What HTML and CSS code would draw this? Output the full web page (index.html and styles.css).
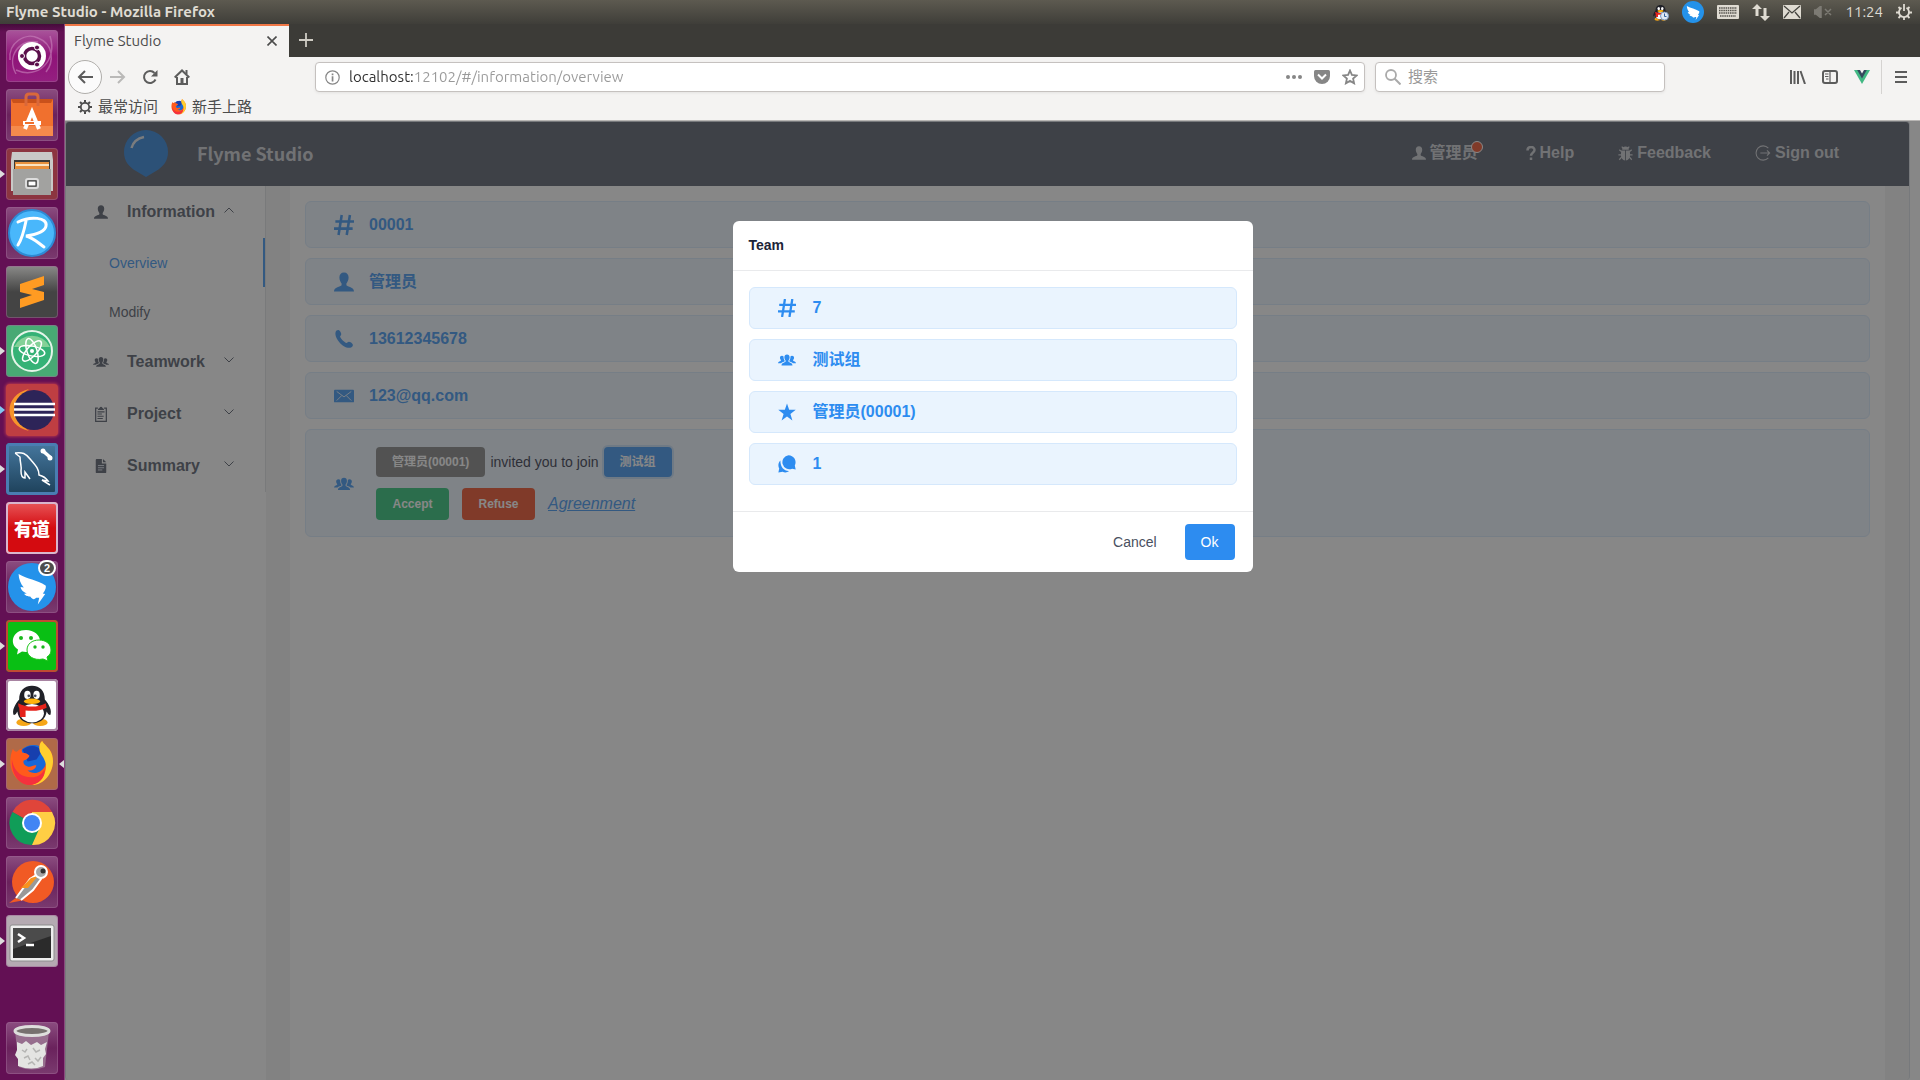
FILE: index.html
```html
<!DOCTYPE html>
<html lang="zh-CN">
<head>
<meta charset="utf-8">
<title>Flyme Studio</title>
<link rel="stylesheet" href="styles.css">
</head>
<body>
<svg class="defs" aria-hidden="true">
  <symbol id="person" viewBox="0 0 20 20"><path d="M10 0.5c3 0 4.6 2 4.6 5 0 3-1.4 4.6-2.2 6v1.8c1 1.7 7.6 1.700 7.600 6.200H0c0-4.500 6.600-4.500 7.600-6.200v-1.800C6.800 10.100 5.400 8.500 5.400 5.500c0-3 1.600-5 4.600-5z"/></symbol>
  <symbol id="people" viewBox="0 0 24 24"><path d="M12 4.500c2.300 0 3.500 1.500 3.500 3.800 0 2.200-1 3.400-1.600 4.400v1.400c1 1.700 5.400 1.500 5.400 5.100H4.700c0-3.600 4.400-3.400 5.400-5.100v-1.400c-.6-1-1.600-2.200-1.600-4.400 0-2.300 1.200-3.800 3.500-3.800z"/><path d="M5.300 6.200c1 0 1.700.4 2.100 1 0 2.500.3 4 1.500 5.800v.8c-.8.9-3.600 1-4.700 2.500H0c0-2.300 2.900-2.300 3.800-3.300v-1c-.5-.8-1.200-1.600-1.200-3.100 0-1.600 1-2.700 2.700-2.700zM18.700 6.200c-1 0-1.700.4-2.100 1 0 2.500-.3 4-1.500 5.800v.8c.8.9 3.600 1 4.700 2.500H24c0-2.300-2.900-2.300-3.800-3.300v-1c.5-.8 1.200-1.600 1.200-3.100 0-1.600-1-2.700-2.700-2.700z"/></symbol>
  <symbol id="pound" viewBox="0 0 22 22"><path d="M8.500 0 5 22M17.500 0 14 22M1.500 7.200H22M0 15H20.500" fill="none" stroke="currentColor" stroke-width="2.800"/></symbol>
  <symbol id="phone" viewBox="0 0 20 20"><path d="M1.500 3.500C2 1.500 3.500.8 5 1.200c1.300.9 2.400 2.900 2.200 4.200-.2 1-1.200 1.400-1.100 2.300.6 2 4.500 5.800 6.300 6.200 1 .1 1.400-1 2.500-1.100 1.300 0 3.300 1.400 3.900 2.600.4 1.400-.7 2.700-2.500 3.300C9.500 20 .3 9.500 1.500 3.500z"/></symbol>
  <symbol id="mail" viewBox="0 0 22 14"><path d="M1 0h20q1 0 1 1v12q0 1-1 1H1q-1 0-1-1V1q0-1 1-1z"/><path d="m3 2 8 6 8-6M3 12l5.500-5.500M19 12l-5.500-5.500" class="cut"/></symbol>
  <symbol id="clipboard" viewBox="0 0 14 18"><path d="M3.500 2.500H1v14.800h12V2.500h-2.500" fill="none" stroke="currentColor" stroke-width="1.400"/><path d="M3.500 4.500c0-2 2-1.500 2.300-3C6 .5 8 .5 8.200 1.500c.3 1.500 2.300 1 2.300 3zM3 6h8v1.200H3zM3 8.500h5v1.200H3zM3 11h7v1.200H3zM3 13.500h6v1.200H3z"/></symbol>
  <symbol id="doc" viewBox="0 0 12 16"><path d="M1 0h6v5h5v10q0 1-1 1H1q-1 0-1-1V1q0-1 1-1z"/><path d="M8.200 0 12 3.800H8.200z"/><path d="M2.500 7.500h7M2.500 10h7M2.500 12.500h5" class="cut"/></symbol>
  <symbol id="chev" viewBox="0 0 10 6"><path d="m.5.500 4.500 4.500L9.500.5" fill="none" stroke="currentColor"/></symbol>
  <symbol id="starfill" viewBox="0 0 20 20"><path d="m10 .5 2.400 7.100h7.300l-5.900 4.500 2.200 7.400-6-4.500-6 4.500 2.200-7.400L.3 7.600h7.300z"/></symbol>
  <symbol id="chat" viewBox="0 0 18 18"><path d="M10.500.3a7 7 0 0 1 6.300 10.200l.9 4-3.600-.8A7 7 0 1 1 10.500.3z"/><path d="M2.400 5.500C.2 7.700-.2 11 1.200 13.500L.4 17.600l4.200-.8c2.300 1.100 4.800.7 6.500-.8C6 16.300 2.200 11.500 2.400 5.500z"/></symbol>
  <symbol id="bug" viewBox="0 0 18 18"><path d="M5 4.500a4 4 0 0 1 8 0zM3.800 5.500h4.700v11.800c-3-.5-5-3-5-6zM9.500 5.500h4.700l.3 5.800c0 3-2 5.500-5 6z"/><path d="M6.500 3 4.500.8M11.500 3l2-2.200M4.500 7 1.500 4.500M13.500 7l3-2.500M4 10.500H.5M14 10.500h3.500M4.500 13l-3 3.500M13.500 13l3 3.500" fill="none" stroke="currentColor" stroke-width="1.500"/></symbol>
  <symbol id="signout" viewBox="0 0 18 18"><path d="M15 3.500a8 8 0 1 0 0 11M6 9h10.500M13.500 6l3 3-3 3" fill="none" stroke="currentColor" stroke-width="1.200"/></symbol>
  <symbol id="gear" viewBox="0 0 16 16"><circle cx="8" cy="8" r="4.200" fill="none" stroke="currentColor" stroke-width="1.800"/><path d="M8 1v2.500M8 12.500V15M1 8h2.500M12.500 8H15M3 3l1.800 1.800M11.200 11.200 13 13M3 13l1.800-1.800M11.200 4.800 13 3" stroke="currentColor" stroke-width="2"/></symbol>
  <symbol id="firefox" viewBox="0 0 48 48"><circle cx="25" cy="22" r="17" fill="#1768d8"/><path d="M14 10c5-5 14-6 20 1l-6 9-9 2z" fill="#173fae"/><path d="M4 9c1 2 2 3 4 3 2-2 4-3 5-3 0 2 0 3 1 4 3 0 5 1 7 3-1 3-4 4-6 5-1 3 1 5 4 6 4 1 6-2 9-1-1 4-5 6-9 5 3 3 9 4 13 1 6-4 7-10 5-15-2-5-5-5-6-9 0-3 1-6 3-7 1 3 8 7 10 14 4 13-5 31-21 31C7 46-4 28 4 9z" fill="#ff5a1c"/><path d="M31 8c0-3 1-6 3-7 1 3 8 7 10 14 4 13-5 31-21 31 12-3 18-17 13-26-2-5-5-6-5-12z" fill="#ffcf2f"/><path d="M3 20c2 13 11 19 22 18 6-1 9-4 11-8 2 7-5 16-15 16C10 46 2 34 3 20z" fill="#f5313d"/></symbol>
  <symbol id="wing" viewBox="0 0 24 24"><circle cx="12" cy="12" r="12" fill="#2492ea"/><path d="M5.300 5.500c4.500 2.500 9 3 13.500 5.700.5 1-.5 3-1.400 4.100l1.200.2-3.700 5.300.7-3.400h-1.500c-1 1-1.700 1-3-.6 0 0-2.200.1-3-1.400l1.300-.2C7.300 14.500 6.400 13 6.300 12l1.600.3C6.200 10.200 5.400 8 5.300 5.500z" fill="#fff"/></symbol>
  <symbol id="penguin" viewBox="0 0 48 48"><ellipse cx="15" cy="43" rx="8" ry="4" fill="#f6a617"/><ellipse cx="33" cy="43" rx="8" ry="4" fill="#f6a617"/><path d="M24 3c9 0 14 6 14 15 5 6 8 12 6 17-2 0-3-2-4-4-1 8-7 13-16 13S9 39 8 31c-1 2-2 4-4 4-2-5 1-11 6-17C10 9 15 3 24 3z" fill="#202128"/><ellipse cx="24" cy="33" rx="13" ry="10" fill="#fff"/><ellipse cx="19" cy="13" rx="3.500" ry="4.500" fill="#fff"/><ellipse cx="29" cy="13" rx="3.500" ry="4.500" fill="#fff"/><circle cx="20.500" cy="14" r="1.500"/><circle cx="27.500" cy="14" r="1.500"/><ellipse cx="24" cy="20" rx="9" ry="3" fill="#ffb40c"/><path d="M9 22c9 5 21 5 30 0l1 5c-5 3-14 4-23 3v7h-6l-1-10c-1-1-1-3-1-5z" fill="#e5231b"/></symbol>
</svg>

<div class="desktop">
  <header class="panel">
    <span class="panel-title">Flyme Studio - Mozilla Firefox</span>
    <div class="tray">
      <svg width="17" height="17"><use href="#penguin"/><circle cx="12.500" cy="12" r="4" fill="#dfe9f5" stroke="#7d9abf"/><path d="M12.500 9.500v3h2" fill="none" stroke="#35639c"/></svg>
      <svg width="22" height="22"><use href="#wing"/></svg>
      <svg width="22" height="14" viewBox="0 0 22 14"><rect width="22" height="14" rx="1" fill="#dfdbd2"/><path d="M2 3h18M2 5.500h18M2 8h18M3 11h16" stroke="#55534d" stroke-width="1.500" stroke-dasharray="1.500 .7"/></svg>
      <svg width="18" height="17" viewBox="0 0 18 17"><path d="M0 5 5 0l5 5H6.500v7h-3V5zM8 12l5 5 5-5h-3.500V4h-3v8z" fill="#dfdbd2"/></svg>
      <svg width="18" height="14" viewBox="0 0 18 14"><rect width="18" height="14" rx="1" fill="#dfdbd2"/><path d="m1 1 8 7 8-7M1 13l5-6M17 13l-5-6" fill="none" stroke="#45443f" stroke-width="1.300"/></svg>
      <svg width="18" height="12" viewBox="0 0 18 12"><path d="M0 4h2l5-4v12L2 8H0zM11 3l6 6M17 3l-6 6" fill="#7d7b74" stroke="#7d7b74" stroke-width="1.500"/></svg>
      <time>11:24</time>
      <svg width="16" height="16" viewBox="0 0 16 16"><path d="M5.500 3.800a5 5 0 1 0 5 0" fill="none" stroke="currentColor" stroke-width="1.800"/><path d="M8 0v7M0 8.500h3M13 8.500h3M2.500 3l2 2M13.500 3l-2 2M2.500 14l2-2M13.500 14l-2-2M8 13v3" stroke="currentColor" stroke-width="1.800"/></svg>
    </div>
  </header>

  <nav class="launcher" aria-label="Launcher">
    <button class="tile ubuntu" aria-label="Ubuntu"><svg viewBox="0 0 52 52"><path d="M4 30C2 12 20 2 32 8c16 6 16 24 8 34M44 6c8 24-12 44-34 34M10 44C0 26 14 8 32 12" fill="none" stroke="#c983bd" stroke-width="1.500" opacity=".6"/><circle cx="26" cy="26" r="14" fill="#fff"/><circle cx="26" cy="26" r="7.500" fill="none" stroke="#5b0f4b" stroke-width="3.500"/><circle cx="16" cy="26" r="2.500" fill="#5b0f4b" stroke="#fff"/><circle cx="31" cy="17.500" r="2.500" fill="#5b0f4b" stroke="#fff"/><circle cx="31" cy="34.500" r="2.500" fill="#5b0f4b" stroke="#fff"/></svg></button>
    <button class="tile" aria-label="Software"><svg viewBox="0 0 52 52"><path d="M5 10h42v37H5z" fill="#f0702e"/><path d="M5 10h42l-2 4H7z" fill="#c9511b"/><path d="M5 37h42v10H5z" fill="#f58a4c"/><path d="M20 17V8q0-3 3-3h6q3 0 3 3v9" fill="none" stroke="#d9683a" stroke-width="3"/><path d="m19 40 7-17 7 17" fill="none" stroke="#fff" stroke-width="4"/><path d="M17 34h18" stroke="#fff" stroke-width="4"/><path d="M19 34h9" stroke="#f0702e" stroke-width="2"/></svg></button>
    <button class="tile files running" aria-label="Files"><svg viewBox="0 0 52 52"><path d="M6 4h40l1 8v31H5V12z" fill="#c9c9c7"/><path d="M8 12h36v10H8z" fill="#3c3a36"/><path d="M9 14h34v9H9z" fill="#e8913d"/><path d="M10 17h33" stroke="#fbe3c0" stroke-width="2"/><path d="M7 21h38v26H7z" fill="#a2a2a0"/><rect x="20" y="31" width="12" height="9" rx="2" fill="#8a8a88" stroke="#ddd" stroke-width="2"/><rect x="22" y="33" width="8" height="5" fill="#fff" stroke="#333"/></svg></button>
    <button class="tile" aria-label="R"><svg viewBox="0 0 52 52"><circle cx="26" cy="26" r="23" fill="#49b7fb" stroke="#2d8ad4" stroke-width="2"/><path d="M20 14c-2 10-4 18-8 24M12 15c12-6 30-5 28 4-1 7-13 9-20 10 8 2 12 7 18 11" fill="none" stroke="#fff" stroke-width="3" stroke-linecap="round"/></svg></button>
    <button class="tile sublime" aria-label="Sublime Text"><svg viewBox="0 0 52 52"><path d="m14 18 24-8v9l-12 4 12 3v8l-24 8v-9l12-4-12-3z" fill="#ff9b22"/></svg></button>
    <button class="tile atom running" aria-label="Atom"><svg viewBox="0 0 52 52"><circle cx="26" cy="26" r="20" fill="#35b276" stroke="#e5f5e9" stroke-width="2"/><path d="M8 22a20 20 0 0 1 36 0z" fill="#b8e6ae" opacity=".6"/><g fill="none" stroke="#fff" stroke-width="1.500"><ellipse cx="26" cy="26" rx="13" ry="5" transform="rotate(12 26 26)"/><ellipse cx="26" cy="26" rx="13" ry="5" transform="rotate(72 26 26)"/><ellipse cx="26" cy="26" rx="13" ry="5" transform="rotate(132 26 26)"/></g><circle cx="26" cy="26" r="2" fill="#fff"/></svg></button>
    <button class="tile eclipse running" aria-label="Eclipse"><svg viewBox="0 0 52 52"><path d="M23 5C-3 11-3 41 23 47 8 37 8 15 23 5z" fill="#f7952b"/><circle cx="28" cy="26" r="20" fill="#2d2458"/><path d="M8 20h41M8 25.500h41M8 31h41" stroke="#fff" stroke-width="2.500"/></svg></button>
    <button class="tile mysql running" aria-label="MySQL Workbench"><svg viewBox="0 0 52 52"><path d="M9 10c7-1 11 0 16 7 5 6 8 9 8 15 4 1 7 3 9 6l-6-1 8 5M9 10l5 4c0 6 2 10 1 14 0 5 1 7 4 7v-6l5 7" fill="none" stroke="#fff" stroke-width="1.500"/><path d="m37 8 8 7" stroke="#fff" stroke-width="3.500"/><circle cx="37" cy="8" r="2.500" fill="#fff"/><circle cx="44" cy="15" r="2.500" fill="#fff"/></svg></button>
    <button class="tile youdao" aria-label="Youdao"><span>有道</span></button>
    <button class="tile" aria-label="DingTalk"><svg viewBox="0 0 52 52"><use href="#wing" x="2" y="2" width="48" height="48"/></svg><b class="count">2</b></button>
    <button class="tile wechat running" aria-label="WeChat"><svg viewBox="0 0 52 52"><path d="M20 10c8 0 14 5 14 11S28 32 20 32l-4-.5-5 3 1-5C3 24 6 10 20 10z" fill="#fff"/><path d="M33 20c7 0 12 4 12 10 0 3-1 5-4 7l1 4-5-2c-9 2-16-3-16-9s5-10 12-10z" fill="#fff" stroke="#19c516"/><g fill="#19b81c"><circle cx="15" cy="18" r="2"/><circle cx="25" cy="18" r="2"/><circle cx="29" cy="27" r="1.700"/><circle cx="37" cy="27" r="1.700"/></g></svg></button>
    <button class="tile qq" aria-label="QQ"><svg viewBox="0 0 52 52"><use href="#penguin" x="4" y="3" width="44" height="46"/></svg></button>
    <button class="tile fox running active" aria-label="Firefox"><svg viewBox="0 0 52 52"><use href="#firefox" x="3" y="2" width="47" height="47"/></svg></button>
    <button class="tile" aria-label="Chrome"><svg viewBox="0 0 52 52"><path d="M26 26 6.500 15A22 22 0 0 1 46 15z" fill="#e0453a"/><path d="M26 26 6.500 15A22 22 0 0 0 26 48l8-15z" fill="#109d58"/><path d="M26 26l8 4-8 18A22 22 0 0 0 46 15H26z" fill="#ffce44"/><circle cx="26" cy="26" r="10" fill="#fff"/><circle cx="26" cy="26" r="8" fill="#4285f4"/></svg></button>
    <button class="tile" aria-label="Postman"><svg viewBox="0 0 52 52"><circle cx="27" cy="26" r="21" fill="#f15a24"/><path d="m3 47 12-9 4 6z" fill="#f15a24"/><path d="m10 42 14-19 8-5 3 5-8 11-12 10" fill="#999" stroke="#fff" stroke-width="2"/><path d="m15 32 10-10 7-2-10 12z" fill="#f7931e"/><circle cx="35" cy="16" r="6" fill="#a7a7a7" stroke="#fff" stroke-width="2"/><circle cx="37" cy="15" r="2.500" fill="#333"/></svg></button>
    <button class="tile terminal running" aria-label="Terminal"><svg viewBox="0 0 52 52"><rect x="4" y="10" width="44" height="36" rx="2" fill="#eee" stroke="#8d8d8d"/><rect x="7" y="13" width="38" height="30" fill="#2b2b2b"/><path d="M7 13h38v8L7 34z" fill="#4b4b4b"/><path d="m12 19 6 4-6 4M20 30h8" fill="none" stroke="#fff" stroke-width="2.500"/></svg></button>
    <button class="tile trash" aria-label="Trash"><svg viewBox="0 0 52 52"><path d="m9 9 4 36q13 5 26 0l4-36z" fill="#a68a9f" opacity=".7"/><path d="m11 20 5 2 4-3 5 4 6-3 4 3 6-3-2 7 1 5-3 4v8q-11 5-25 0v-7l-3-4 2-5z" fill="#e4e4e2"/><path d="m16 28 3 2 2-3M27 26l3 4 4-2M18 36l4-2 2 4M29 36l3 3 3-4M22 42l4-2 3 3" fill="none" stroke="#b5b5b3" stroke-width="1.500"/><ellipse cx="26" cy="9" rx="17" ry="4.500" fill="#77716f" stroke="#dededc" stroke-width="3"/></svg></button>
  </nav>

  <section class="browser">
    <div class="tabbar">
      <div class="tab"><span>Flyme Studio</span><button aria-label="Close tab"><svg width="10" height="10" viewBox="0 0 10 10"><path d="m.5.500 9 9M9.500.5l-9 9" stroke="currentColor" stroke-width="1.600"/></svg></button></div>
      <button class="newtab" aria-label="New tab"><svg width="14" height="14" viewBox="0 0 14 14"><path d="M7 0v14M0 7h14" stroke="currentColor" stroke-width="1.800"/></svg></button>
    </div>
    <div class="toolbar">
      <div class="navbtns">
        <button class="back" aria-label="Back"><svg width="16" height="14" viewBox="0 0 16 14"><path d="M16 7H2M8 1 2 7l6 6" fill="none" stroke="currentColor" stroke-width="2"/></svg></button>
        <button class="dim" aria-label="Forward"><svg width="16" height="14" viewBox="0 0 16 14"><path d="M0 7h14M8 1l6 6-6 6" fill="none" stroke="currentColor" stroke-width="2"/></svg></button>
        <button aria-label="Reload"><svg width="16" height="16" viewBox="0 0 16 16"><path d="M13.500 10.500A6 6 0 1 1 12.500 4" fill="none" stroke="currentColor" stroke-width="2"/><path d="M15.500 1v6.500H9z"/></svg></button>
        <button aria-label="Home"><svg width="16" height="16" viewBox="0 0 16 16"><path d="m.7 8.500 7.300-7 7.300 7M3 8v7h10V8" fill="none" stroke="currentColor" stroke-width="2"/><path d="M6.500 9h3v6h-3zM11.500 1h2v4h-2z"/></svg></button>
      </div>
      <div class="field url">
        <svg width="15" height="15" viewBox="0 0 15 15"><circle cx="7.500" cy="7.500" r="6.700" fill="none" stroke="currentColor" stroke-width="1.200"/><path d="M6.700 3.500h1.700v1.700H6.700zM6.700 6.300h1.700V11.500H6.700z"/></svg>
        <input type="text" aria-label="Address" value="localhost:12102/#/information/overview">
        <svg width="16" height="4" viewBox="0 0 16 4"><circle cx="2" cy="2" r="2"/><circle cx="8" cy="2" r="2"/><circle cx="14" cy="2" r="2"/></svg>
        <svg width="16" height="14" viewBox="0 0 16 14"><path d="M1.500 0h13Q16 0 16 1.500V6A8 8 0 0 1 0 6V1.500Q0 0 1.500 0z"/><path d="m4 4.500 4 4 4-4" fill="none" stroke="#fff" stroke-width="2"/></svg>
        <svg width="16" height="16" viewBox="0 0 16 16"><path d="m8 1.500 1.900 4.400 4.800.5-3.600 3.200 1 4.700L8 11.900l-4.100 2.400 1-4.700L1.300 6.400l4.800-.5z" fill="none" stroke="currentColor" stroke-width="1.800"/></svg>
      </div>
      <div class="field search">
        <svg width="16" height="16" viewBox="0 0 16 16"><circle cx="6" cy="6" r="5" fill="none" stroke="currentColor" stroke-width="1.800"/><path d="m9.500 9.500 6 6" stroke="currentColor" stroke-width="2"/></svg>
        <input type="text" aria-label="搜索" placeholder="搜索">
      </div>
      <div class="tools">
        <button aria-label="Library"><svg width="16" height="14" viewBox="0 0 16 14"><path d="M1 0v14M4.500 1v13M8 1v13M10.500 1l4.500 13" stroke="currentColor" stroke-width="2" fill="none"/></svg></button>
        <button aria-label="Sidebar"><svg width="16" height="14" viewBox="0 0 16 14"><rect x="1" y="1" width="14" height="12" rx="2" fill="none" stroke="currentColor" stroke-width="2"/><path d="M8 1v12M3 4h3.500M3 6.500h3.500M4 9h2.500" stroke="currentColor" stroke-width="1.200"/></svg></button>
        <button aria-label="Vue devtools"><svg width="16" height="14" viewBox="0 0 16 14"><path d="M0 0h16L8 14z" fill="#41b883"/><path d="M3.200 0h9.600L8 8.500z" fill="#35495e"/><path d="M6 0h4L8 3.500z" fill="#f4f3f2"/></svg></button>
        <button class="burger" aria-label="Menu"><svg width="12" height="12" viewBox="0 0 12 12"><path d="M0 1h12M0 6h12M0 11h12" stroke="currentColor" stroke-width="2"/></svg></button>
      </div>
    </div>
    <div class="bookmarks">
      <a href="#"><svg width="16" height="16"><use href="#gear"/></svg>最常访问</a>
      <a href="#"><svg width="16" height="16"><use href="#firefox"/></svg>新手上路</a>
    </div>

    <div class="viewport">
      <div class="layout">
        <header class="head">
          <svg class="logo" viewBox="0 0 44 47"><path d="M22 0a22 22 0 0 1 22 22c0 9-5 15-12 19L22 47 12 41C5 37 0 31 0 22A22 22 0 0 1 22 0z" fill="#1c78d8"/><path d="M7.500 18Q10 9 20 7" fill="none" stroke="#dfe3e8" stroke-width="2.500"/></svg>
          <span class="brand">Flyme Studio</span>
          <nav>
            <a href="#"><svg width="14" height="14"><use href="#person"/></svg><span class="dotted">管理员</span></a>
            <a href="#"><svg width="10" height="14" viewBox="0 0 10 14"><path d="M1.500 4.500C1.500 0 8.500 0 8.500 4c0 2.500-3.500 2.800-3.500 5.800M5 11.500V14" fill="none" stroke="currentColor" stroke-width="2.500"/></svg>Help</a>
            <a href="#"><svg width="15" height="15"><use href="#bug"/></svg>Feedback</a>
            <a href="#"><svg width="16" height="16"><use href="#signout"/></svg>Sign out</a>
          </nav>
        </header>
        <div class="body">
          <aside>
            <ul class="menu">
              <li><button class="sub"><svg width="16" height="14"><use href="#person"/></svg>Information<svg class="chev up" width="10" height="6"><use href="#chev"/></svg></button>
                <a class="item current" href="#">Overview</a>
                <a class="item" href="#">Modify</a></li>
              <li><button class="sub"><svg width="16" height="16"><use href="#people"/></svg>Teamwork<svg class="chev" width="10" height="6"><use href="#chev"/></svg></button></li>
              <li><button class="sub"><svg width="16" height="16"><use href="#clipboard"/></svg>Project<svg class="chev" width="10" height="6"><use href="#chev"/></svg></button></li>
              <li><button class="sub"><svg width="16" height="14"><use href="#doc"/></svg>Summary<svg class="chev" width="10" height="6"><use href="#chev"/></svg></button></li>
            </ul>
          </aside>
          <main>
            <div class="alert"><svg width="22" height="22"><use href="#pound"/></svg>00001</div>
            <div class="alert"><svg width="20" height="20"><use href="#person"/></svg>管理员</div>
            <div class="alert"><svg width="20" height="20"><use href="#phone"/></svg>13612345678</div>
            <div class="alert"><svg width="22" height="14"><use href="#mail"/></svg>123@qq.com</div>
            <div class="alert invite"><svg width="22" height="22"><use href="#people"/></svg>
              <div class="rows">
                <div class="join"><button class="btn gray">管理员(00001)</button><span>invited you to join</span><button class="btn blue">测试组</button></div>
                <div class="act"><button class="btn green">Accept</button><button class="btn red">Refuse</button><a href="#">Agreenment</a></div>
              </div>
            </div>
          </main>
        </div>
      </div>
      <div class="mask">
        <div class="modal" role="dialog" aria-labelledby="modal-title">
          <h2 id="modal-title">Team</h2>
          <div class="modal-body">
            <div class="alert"><svg width="18" height="18"><use href="#pound"/></svg>7</div>
            <div class="alert"><svg width="18" height="18"><use href="#people"/></svg>测试组</div>
            <div class="alert"><svg width="18" height="18"><use href="#starfill"/></svg>管理员(00001)</div>
            <div class="alert"><svg width="18" height="18"><use href="#chat"/></svg>1</div>
          </div>
          <footer><button class="cancel">Cancel</button><button class="ok">Ok</button></footer>
        </div>
      </div>
    </div>
  </section>
</div>
</body>
</html>
```

FILE: styles.css
```css
* { box-sizing: border-box; }
body { margin: 0; font-family: "Liberation Sans", "Noto Sans CJK SC", sans-serif; font-size: 14px; color: #495060; }
button { font: inherit; color: inherit; background: none; border: 0; padding: 0; display: inline-flex; align-items: center; justify-content: center; }
a { color: inherit; text-decoration: none; }
svg { display: block; flex: none; fill: currentColor; }
.defs { width: 0; height: 0; position: absolute; }

.desktop { display: grid; grid-template: 24px minmax(0, 1fr) / 65px minmax(0, 1fr); height: 100vh; overflow: hidden; }

/* top panel */
.panel { grid-column: 1 / 3; display: flex; align-items: center; justify-content: space-between; padding: 0 8px 0 6px; background: linear-gradient(#5d5a50, #3f3e39); color: #dfdbd2; font-family: Ubuntu, "Noto Sans", sans-serif; font-size: 15px; line-height: 20px; }
.panel-title { font-weight: 700; }
.tray { display: flex; align-items: center; gap: 13px; }

/* launcher */
.launcher { display: flex; flex-direction: column; gap: 7px; padding: 6px; background: linear-gradient(#450b3b, #631054 8px); border-right: 1px solid #8a4a7e; }
.tile { position: relative; width: 52px; height: 52px; flex: none; border-radius: 4px; background: linear-gradient(#8b4d80, #6a225c 50%, #7a3a6f); box-shadow: inset 0 0 0 1px #a0669680; }
.tile svg { width: 52px; height: 52px; }
.ubuntu { background: linear-gradient(#a9559b, #8f1378 50%, #941f80); }
.files { background: #8c3540; }
.sublime { background: linear-gradient(#8a8a88, #444 50%); }
.atom { background: #48a974; }
.eclipse { background: #bf3e42; box-shadow: 0 0 3px 1px #ff534880; }
.mysql { background: linear-gradient(#46789f, #1d4059); box-shadow: inset 0 0 0 3px #4a7db2; }
.youdao { background: linear-gradient(#e8575a, #d40b10 50%); box-shadow: inset 0 0 0 2px #d9b5cd; color: #fff; font-size: 18px; font-weight: 900; }
.wechat { background: #09bf14; box-shadow: inset 0 0 0 2px #c04a33; }
.qq { background: #fff; box-shadow: inset 0 0 0 2px #a884a2; }
.fox { background: #b06a48; }
.terminal { background: #b5aab2; }
.trash { margin-top: auto; }
.running::before { content: ""; position: absolute; left: -6px; top: 22px; border: 4px solid transparent; border-left: 5px solid #ddd; border-right: 0; }
.eclipse::before { border-left-color: #80c8f0; }
.active::after { content: ""; position: absolute; right: -6px; top: 22px; border: 4px solid transparent; border-right: 5px solid #ddd; border-left: 0; }
.count { position: absolute; right: 2px; top: -1px; width: 18px; height: 16px; border: 2px solid #fff; border-radius: 8px; background: #4d4d4d; color: #fff; font-size: 11px; line-height: 12px; text-align: center; }

/* browser chrome */
.browser { display: flex; flex-direction: column; min-width: 0; background: #f4f3f2; font-family: Ubuntu, "Noto Sans", "Noto Sans CJK SC", sans-serif; font-size: 15px; line-height: 20px; color: #4c4c4c; }
.tabbar { display: flex; height: 33px; background: #3c3b37; flex: none; }
.tab { width: 224px; display: flex; align-items: center; justify-content: space-between; padding: 0 12px 2px 9px; border-top: 2px solid #f07746; background: #f4f3f2; }
.newtab { width: 33px; padding-bottom: 2px; color: #cfccc4; }
.toolbar { display: flex; align-items: center; height: 40px; flex: none; }
.navbtns { display: flex; align-items: center; padding-left: 3px; width: 250px; color: #5c5c5c; }
.navbtns button { width: 32px; height: 34px; }
.navbtns .back { width: 34px; border: 1px solid #b0aeab; border-radius: 50%; background: #fbfbfb; }
.navbtns .dim { color: #bab9b8; }
.field { display: flex; align-items: center; height: 30px; border: 1px solid #c5c1bf; border-radius: 4px; background: #fff; color: #868686; padding: 0 9px; box-shadow: 0 1px 3px #0001; }
.field input { flex: 1; min-width: 0; border: 0; padding: 0; outline: 0; background: none; font: inherit; }
.url { flex: 1; max-width: 1050px; gap: 12px; padding-right: 6px; }
.url input { margin-left: -3px; color: transparent; background: linear-gradient(90deg, #2e2e2e 64px, #999 64px); background-clip: text; -webkit-background-clip: text; }
.search { width: 290px; margin-left: 10px; gap: 7px; color: #aaa; }
.search input::placeholder { color: #999; opacity: 1; }
.tools { margin-left: auto; display: flex; align-items: center; gap: 16px; color: #5c5c5c; }
.burger { height: 34px; width: 39px; border-left: 1px solid #d5d3d1; margin-left: -5px; }
.bookmarks { display: flex; gap: 13px; height: 24px; padding: 0 12px 4px; align-items: center; flex: none; border-bottom: 1px solid #b8b6b4; }
.bookmarks a { display: flex; align-items: center; gap: 5px; }

/* page */
.viewport { position: relative; flex: 1; min-height: 0; overflow: hidden; display: flex; background: #fff; font-family: "Liberation Sans", "Noto Sans CJK SC", sans-serif; font-size: 14px; color: #495060; }
.layout { flex: 1; margin-right: 10px; border: 1px solid #d7dde4; border-bottom: 0; border-radius: 4px; overflow: hidden; display: flex; flex-direction: column; background: #f3f3f3; }
.head { display: flex; align-items: center; height: 64px; flex: none; padding: 0 70px 2px 58px; background: #495060; color: #c8cacf; }
.logo { width: 44px; height: 47px; }
.brand { margin-left: 29px; font: 700 18px/20px "Noto Sans CJK SC", sans-serif; }
.head nav { margin-left: auto; display: flex; gap: 44px; font-size: 16px; font-weight: 700; }
.head nav a { display: flex; align-items: center; gap: 4px; }
.head nav a:first-child { margin-right: 4px; }
.dotted { position: relative; }
.dotted::after { content: ""; position: absolute; top: -2px; right: -5px; width: 10px; height: 10px; border: 1px solid #fff; border-radius: 50%; background: #ed3f14; }
.body { flex: 1; display: flex; }
aside { width: 200px; flex: none; background: #fff; }
.menu { list-style: none; margin: 0; padding: 0; border-right: 1px solid #dddee1; }
.sub { display: flex; width: 100%; height: 52px; justify-content: flex-start; padding: 0 31px 0 27px; font-size: 16px; font-weight: 700; }
.sub svg:first-child { margin-right: 18px; }
.sub .chev { margin: 0 0 4px auto; }
.up { transform: rotate(180deg); }
.item { display: flex; align-items: center; height: 49px; padding-left: 43px; }
.current { color: #2d8cf0; border-right: 2px solid #2d8cf0; }
main { flex: 1; margin: 0 24px; padding: 15px; background: #fff; }
.alert { display: flex; align-items: center; height: 47px; margin-bottom: 10px; padding-left: 28px; border: 1px solid #d5e8fc; border-radius: 6px; background: #eaf4fe; color: #2d8cf0; font-size: 16px; line-height: 20px; font-weight: 700; }
.alert > svg { width: 20px; margin-right: 15px; overflow: visible; }
.cut { fill: none; stroke: #eaf4fe; stroke-width: 1; }
.invite { height: auto; padding-top: 17px; padding-bottom: 16px; }
.rows { display: grid; gap: 11px; margin-left: 7px; }
.join, .act { display: flex; align-items: center; }
.join { gap: 5px; color: #1c2438; font-size: 14px; font-weight: 400; }
.act { gap: 13px; }
.act a { font-style: italic; font-weight: 400; text-decoration: underline; }
.btn { height: 32px; padding: 0 16px; border-radius: 4px; color: #fff; font-size: 12px; font-weight: 700; }
.act .btn { width: 73px; }
.join .btn { height: 30px; }
.gray { background: #7c7c7c; }
.blue { background: #2d8cf0; box-shadow: 0 0 0 2px #2d8cf033; }
.green { background: #19be6b; }
.red { background: #ed3f14; }

/* dialog */
.mask { position: absolute; inset: 0; padding-top: 100px; background: rgba(55, 55, 55, .6); }
.modal { width: 520px; max-width: 100%; margin: 0 auto; border-radius: 6px; background: #fff; }
.modal h2 { margin: 0; padding: 14px 16px; border-bottom: 1px solid #e9eaec; font-size: 14px; line-height: 21px; color: #1c2438; }
.modal-body { padding: 16px; }
.modal .alert { height: 42px; }
.modal .alert > svg { width: 18px; margin-right: 17px; }
.modal footer { display: flex; justify-content: flex-end; gap: 12px; padding: 12px 18px; border-top: 1px solid #e9eaec; }
.modal footer button { height: 36px; padding: 0 16px; border-radius: 4px; }
.modal footer .ok { background: #2d8cf0; color: #fff; }
```
